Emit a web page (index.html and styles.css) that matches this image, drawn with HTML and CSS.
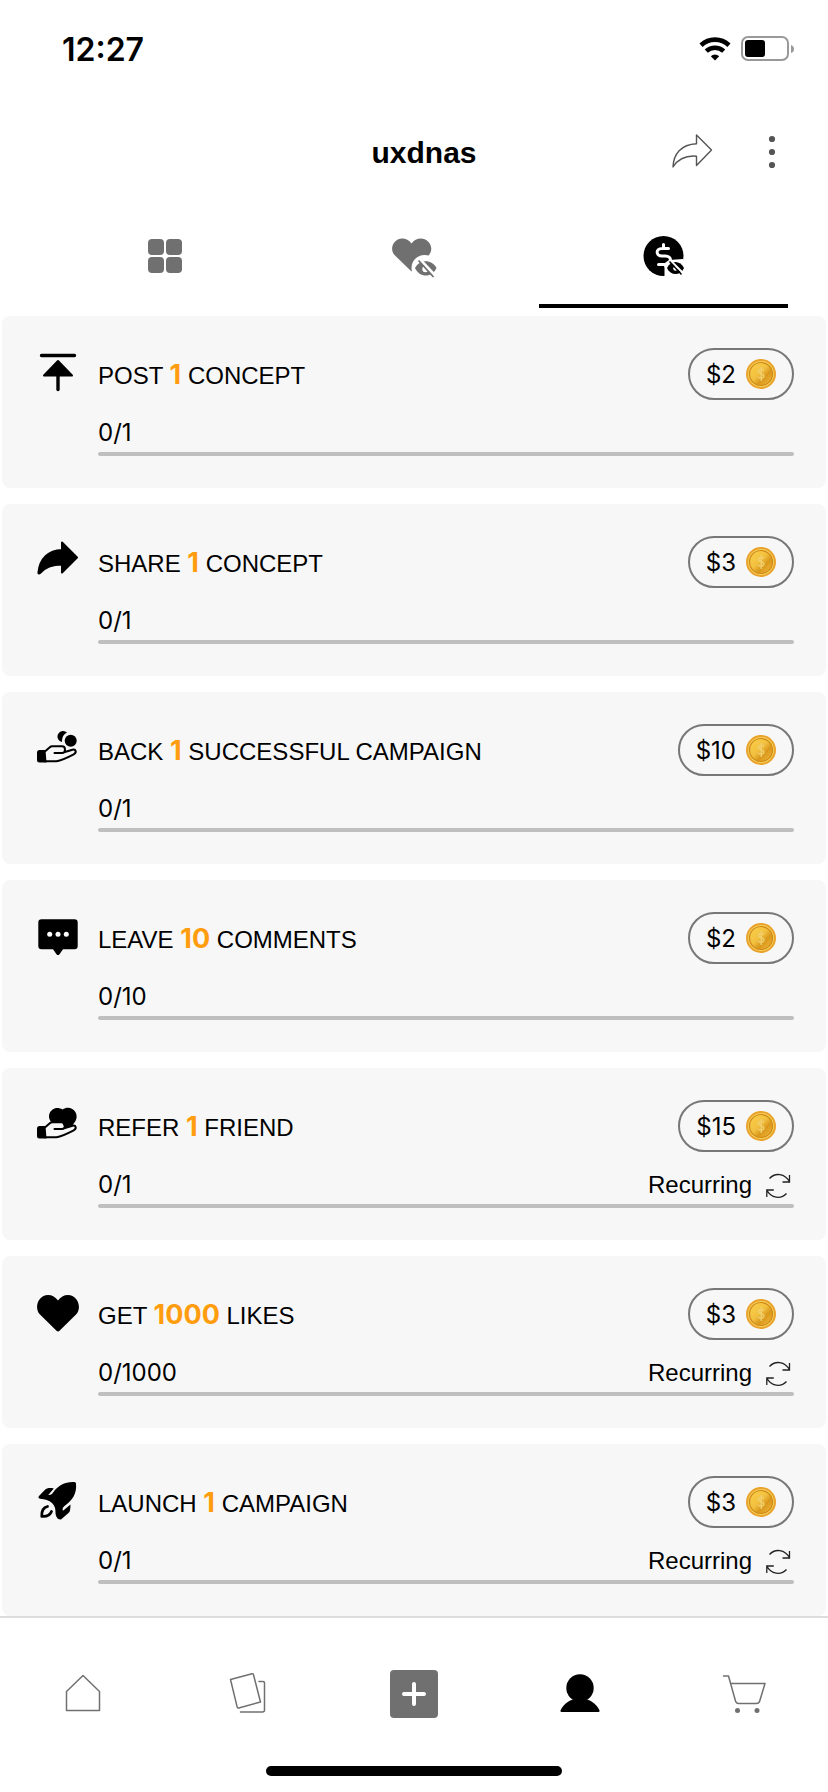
FILE: index.html
```
<!DOCTYPE html>
<html lang="en">
<head>
  <meta charset="UTF-8" />
  <meta name="viewport" content="width=device-width, initial-scale=1.0"/>
  <title>uxdnas - Rewards</title>
  <link rel="stylesheet" href="styles.css">
</head>
<body>

  <!-- Shared symbols -->
  <svg class="sprite" aria-hidden="true">
    <defs>
      <linearGradient id="gold" x1="0" y1="0" x2="1" y2="1">
        <stop offset="0" stop-color="#fbd04a"/>
        <stop offset="0.45" stop-color="#f2c040"/>
        <stop offset="0.65" stop-color="#d9981c"/>
        <stop offset="1" stop-color="#f7c040"/>
      </linearGradient>
    </defs>
    <symbol id="coin" viewBox="0 0 30 30">
      <circle cx="15" cy="15" r="15" fill="#e9a22a"/>
      <circle cx="15" cy="15" r="13" fill="#f6cf5c"/>
      <circle cx="15" cy="15" r="11.5" fill="url(#gold)" stroke="#cf8a18" stroke-width="1.2"/>
      <path d="M18 11.500c-1-1.500-5.500-1.600-5.500 1 0 2.600 5.500 1.900 5.500 4.700 0 2.500-4.700 2.400-6 .8M15.300 8v14" fill="none" stroke="#f0cf6c" stroke-width="1.500"/>
    </symbol>
    <symbol id="recur" viewBox="0 0 30 30">
      <path d="M5.500 8.500C11 2.500 21 3 25.500 12M25.500 5v7h-7M22.500 23.500C17 29.500 7 28.500 2.800 20M2.800 27v-7h7" fill="none" stroke="#222" stroke-width="1.3"/>
    </symbol>
    <symbol id="hand" viewBox="0 0 44 44">
      <path d="M3.500 22H9.500l1 12.500h-7Q1 34.500 1 32v-7.500q0-2.500 2.500-2.500z"/>
      <path d="M9.500 23 13.500 19.500q1.200-1.200 3-1.200h9.500c4 0 4 6.700 0 6.700h-7.500M28 24.200l8.500-2.500c3.500-.8 4.500 3 1.200 4.600C32.500 29 26 32.300 20.500 33.300H9" fill="none" stroke="#000" stroke-width="2" stroke-linecap="round" stroke-linejoin="round"/>
    </symbol>
  </svg>

  <div class="status-bar">
    <span class="time">12:27</span>
    <div class="status-icons">
      <svg width="32" height="24" viewBox="0 0 32 24" aria-label="Wi-Fi">
        <path d="M2 8.200A20.500 20.500 0 0 1 30 8.200" fill="none" stroke="#000" stroke-width="4.600"/>
        <path d="M7.300 14.200a12.500 12.500 0 0 1 17.400 0" fill="none" stroke="#000" stroke-width="4.400"/>
        <path d="M11.800 19.200a6.200 6.200 0 0 1 8.400 0L16 23.500z"/>
      </svg>
      <svg width="53" height="26" viewBox="0 0 53 26" aria-label="Battery">
        <rect x="1" y="1" width="46" height="23" rx="6" fill="none" stroke="#999" stroke-width="2"/>
        <rect x="4" y="4" width="20" height="17" rx="3"/>
        <path d="M50 9q3 1 3 4t-3 4z" fill="#999"/>
      </svg>
    </div>
  </div>

  <header class="header">
    <h1>uxdnas</h1>
    <div class="header-actions">
      <button type="button" class="icon-btn" aria-label="Share">
        <svg width="44" height="44" viewBox="0 0 44 44">
          <path d="M26.500 4 41.500 19 26.500 34.500V25.200C18 24.500 9 26.500 3 36 3.500 23 11 13.500 26.500 12.800z" fill="none" stroke="#555" stroke-width="1.400" stroke-linejoin="round"/>
        </svg>
      </button>
      <button type="button" class="icon-btn menu-btn" aria-label="More options">
        <svg width="32" height="44" viewBox="0 0 32 44" fill="#555">
          <circle cx="16" cy="8" r="3.100"/>
          <circle cx="16" cy="21" r="3.100"/>
          <circle cx="16" cy="34" r="3.100"/>
        </svg>
      </button>
    </div>
  </header>

  <div class="tabs" role="tablist">
    <button type="button" class="tab" role="tab" aria-label="Concepts">
      <svg width="48" height="48" viewBox="0 0 48 48" fill="#707070">
        <rect x="7" y="7" width="16" height="16" rx="4"/>
        <rect x="25" y="7" width="16" height="16" rx="4"/>
        <rect x="7" y="25" width="16" height="16" rx="4"/>
        <rect x="25" y="25" width="16" height="16" rx="4"/>
      </svg>
    </button>
    <button type="button" class="tab" role="tab" aria-label="Liked, hidden">
      <svg width="48" height="48" viewBox="0 0 48 48">
        <path d="M21.500 39.500 5 23.500C-2 16 5 6.500 12 6.500c4 0 7 1.800 9.500 5 2.500-3.200 5.500-5 9.500-5 7 0 14 8.500 8 16.500z" fill="#707070"/>
        <circle cx="34.500" cy="36" r="13" fill="#fff"/>
        <path d="M25 36c4.500-9 17-9 21.500 0-4.500 10-17 10-21.500 0z" fill="#707070"/>
        <circle cx="35.500" cy="37" r="3.200" fill="#fff"/>
        <path d="M30 27.500 45.500 44" stroke="#fff" stroke-width="3"/>
        <path d="M28.500 28.500 43.500 45" stroke="#707070" stroke-width="1.800"/>
      </svg>
    </button>
    <button type="button" class="tab active" role="tab" aria-selected="true" aria-label="Rewards, hidden">
      <svg width="48" height="48" viewBox="0 0 48 48">
        <circle cx="24.500" cy="24" r="20"/>
        <path d="M29.500 16.500h-6.500c-6.500 0-6.500 7.500 0 7.500h3.500c3 0 5 2 5 4M24.500 12.500v4M19.500 32.500h6" fill="none" stroke="#fff" stroke-width="3" stroke-linecap="round"/>
        <path d="M25.500 45V36l-1-4 5.500-4 14-1 3 18z" fill="#fff"/>
        <path d="M28 36c3.500-8 13.500-8 17 0-3.500 8-13.500 8-17 0z"/>
        <circle cx="36.500" cy="36.500" r="2.300" fill="#fff"/>
        <path d="m32 29 12 12" stroke="#fff" stroke-width="2"/>
        <path d="m30.500 29.500 12 13" stroke="#000" stroke-width="1.500"/>
      </svg>
    </button>
  </div>

  <main class="tasks">
    <section class="card">
      <svg class="task-icon" viewBox="0 0 44 44">
        <path d="M5.500 3.500h33M22 24v13.500" stroke="#000" stroke-width="3.400" stroke-linecap="round"/>
        <path d="M22 9 36 23.500H8z" stroke="#000" stroke-width="2" stroke-linejoin="round"/>
      </svg>
      <h2>POST <b>1</b> CONCEPT</h2>
      <div class="reward">$2 <svg class="coin"><use href="#coin"/></svg></div>
      <div class="progress-row"><label for="p1">0/1</label></div>
      <progress id="p1" value="0" max="1"></progress>
    </section>

    <section class="card">
      <svg class="task-icon" viewBox="0 0 44 44">
        <path d="M26 2.500 41 17.500 26 32.500V24.500C17 24.500 10 26 4 33c-1 1-2 .3-1.500-1C4 19 12 10.500 26 10z" stroke="#000" stroke-width="2" stroke-linejoin="round"/>
      </svg>
      <h2>SHARE <b>1</b> CONCEPT</h2>
      <div class="reward">$3 <svg class="coin"><use href="#coin"/></svg></div>
      <div class="progress-row"><label for="p2">0/1</label></div>
      <progress id="p2" value="0" max="1"></progress>
    </section>

    <section class="card">
      <svg class="task-icon" viewBox="0 0 44 44">
        <circle cx="34.700" cy="12.700" r="6"/>
        <path d="M31 4.500A5.600 5.600 0 1 0 26 14q-.5-6.500 5-9.500z"/>
        <use href="#hand"/>
      </svg>
      <h2>BACK <b>1</b> SUCCESSFUL CAMPAIGN</h2>
      <div class="reward">$10 <svg class="coin"><use href="#coin"/></svg></div>
      <div class="progress-row"><label for="p3">0/1</label></div>
      <progress id="p3" value="0" max="1"></progress>
    </section>

    <section class="card">
      <svg class="task-icon" viewBox="0 0 44 44">
        <path d="M5.500 3.300h33q3.200 0 3.200 3.200v23.600q0 3.200-3.200 3.200H27l-3.500 4.900q-1.500 1.800-3 0L17 33.300H5.500q-3.200 0-3.200-3.200V6.500q0-3.200 3.200-3.200z"/>
        <g fill="#fff">
          <circle cx="13.700" cy="18.300" r="2.500"/>
          <circle cx="22" cy="18.300" r="2.500"/>
          <circle cx="30.300" cy="18.300" r="2.500"/>
        </g>
      </svg>
      <h2>LEAVE <b>10</b> COMMENTS</h2>
      <div class="reward">$2 <svg class="coin"><use href="#coin"/></svg></div>
      <div class="progress-row"><label for="p4">0/10</label></div>
      <progress id="p4" value="0" max="10"></progress>
    </section>

    <section class="card">
      <svg class="task-icon" viewBox="0 0 44 44">
        <path d="M27 26 15 17.500C9 10 18 0 26.500 5.500 35 0 44 9 39.500 17L36 22z"/>
        <path d="m10.500 23 5-4.500h10.500l2 4-1 2.500 10-2 2 2.500L20 33.500h-9.500z" fill="#f7f7f7"/>
        <use href="#hand"/>
      </svg>
      <h2>REFER <b>1</b> FRIEND</h2>
      <div class="reward">$15 <svg class="coin"><use href="#coin"/></svg></div>
      <div class="progress-row">
        <label for="p5">0/1</label>
        <span class="recurring">Recurring <svg><use href="#recur"/></svg></span>
      </div>
      <progress id="p5" value="0" max="1"></progress>
    </section>

    <section class="card">
      <svg class="task-icon" viewBox="0 0 44 44">
        <path d="M20.500 38.800 4 22.500C-2.500 15.500 2.500 3 12 3c4.200 0 7.500 2 10 5.500C24.500 5 27.800 3 32 3c9.500 0 14.500 12.500 8 19.500L23.500 38.800q-1.500 1.400-3 0z"/>
      </svg>
      <h2>GET <b>1000</b> LIKES</h2>
      <div class="reward">$3 <svg class="coin"><use href="#coin"/></svg></div>
      <div class="progress-row">
        <label for="p6">0/1000</label>
        <span class="recurring">Recurring <svg><use href="#recur"/></svg></span>
      </div>
      <progress id="p6" value="0" max="1000"></progress>
    </section>

    <section class="card">
      <svg class="task-icon" viewBox="0 0 44 44">
        <path d="M38.500 2C29 1.500 22 5.500 17.500 12c-1.500 2-3 3.500-5.200 3L17.800 8.500c-4-1-7-.5-9 1.500L3 16q-1.500 2 1 2.800c5 .7 9 1.200 12 4.200s3.500 6 3.500 9.500c0 3.500 2 7.500 5.500 7l8-7q1.500-1.500 1.500-8l-7.500 6.300c-1-2 0-3.500 1.500-4.800C36.500 20.500 41 13.500 40 3.500q-.2-1.300-1.500-1.500z"/>
        <path d="M11.500 26.500C7 27.500 5.500 31 5.800 36.300c4.700.5 8.200-1.300 9.700-4.800" fill="none" stroke="#000" stroke-width="2.800" stroke-linecap="round" stroke-linejoin="round"/>
      </svg>
      <h2>LAUNCH <b>1</b> CAMPAIGN</h2>
      <div class="reward">$3 <svg class="coin"><use href="#coin"/></svg></div>
      <div class="progress-row">
        <label for="p7">0/1</label>
        <span class="recurring">Recurring <svg><use href="#recur"/></svg></span>
      </div>
      <progress id="p7" value="0" max="1"></progress>
    </section>
  </main>

  <nav class="bottom-nav">
    <div class="nav-items">
      <a href="#" aria-label="Home">
        <svg viewBox="0 0 48 48" fill="none" stroke="#707070" stroke-width="1.500" stroke-linejoin="round">
          <path d="M7.500 21.500 24 5.500l16.500 16v19h-33z"/>
        </svg>
      </a>
      <a href="#" aria-label="Concepts">
        <svg viewBox="0 0 48 48" fill="none" stroke="#707070" stroke-width="1.500" stroke-linejoin="round" stroke-linecap="round">
          <path d="M6.500 9.500 28 3.800q1.200-.3 1.500.9l7 27.300-21.800 6q-1.200.3-1.500-.9z"/>
          <path d="M35 11.500h4q1.500 0 1.500 1.500v27q0 2-2 2H16.500"/>
        </svg>
      </a>
      <a href="#" aria-label="Add">
        <svg viewBox="0 0 48 48">
          <rect width="48" height="48" rx="4" fill="#707070"/>
          <path d="M24 14v20M14 24h20" stroke="#fff" stroke-width="4" stroke-linecap="round"/>
        </svg>
      </a>
      <a href="#" aria-label="Profile">
        <svg viewBox="0 0 48 48">
          <circle cx="24" cy="18" r="13.700"/>
          <path d="M17 29.500h14c6 2 10 5.500 12.500 11q.5 1.500-1.500 1.500H6q-2 0-1.500-1.500C7 35 11 31.500 17 29.500z"/>
        </svg>
      </a>
      <a href="#" aria-label="Cart">
        <svg viewBox="0 0 48 48">
          <path d="M2.500 6H7.500l7 25q.8 2.500 3 2.500h18q2.500 0 3.200-2.500L44 13.500H10" fill="none" stroke="#707070" stroke-width="1.500" stroke-linejoin="round" stroke-linecap="round"/>
          <circle cx="16.500" cy="40.500" r="2.500" fill="#707070"/>
          <circle cx="36" cy="40.500" r="2.500" fill="#707070"/>
        </svg>
      </a>
    </div>
    <div class="home-indicator"></div>
  </nav>

</body>
</html>
```

FILE: styles.css
```
* {
  box-sizing: border-box;
}

body {
  margin: 0;
  min-height: 100vh;
  display: flex;
  flex-direction: column;
  background-color: #fff;
  color: #000;
  font-family: "Liberation Sans", Arial, sans-serif;
  font-size: 24px;
}

svg {
  display: block;
  flex-shrink: 0;
}

.sprite {
  position: absolute;
  width: 0;
  height: 0;
}

button {
  padding: 0;
  border: none;
  background: none;
  cursor: pointer;
}

/* Status bar */
.status-bar {
  display: flex;
  justify-content: space-between;
  align-items: center;
  height: 98px;
  padding: 0 34px 0 62px;
}

.time {
  font-family: Inter, sans-serif;
  font-size: 32px;
  font-weight: 600;
}

.status-icons {
  display: flex;
  align-items: center;
  gap: 10px;
}

/* Header */
.header {
  display: grid;
  grid-template-columns: 1fr auto 1fr;
  align-items: center;
  height: 110px;
  padding: 0 40px 0 60px;
}

.header h1 {
  grid-column: 2;
  margin: 0;
  font-size: 30px;
}

.header-actions {
  display: flex;
  justify-content: flex-end;
  gap: 42px;
}

/* Tabs */
.tabs {
  display: grid;
  grid-template-columns: repeat(3, 1fr);
  padding: 0 40px;
  margin-bottom: 8px;
}

.tab {
  display: flex;
  justify-content: center;
  align-items: center;
  height: 100px;
  border-bottom: 4px solid transparent;
}

.tab.active {
  border-bottom-color: #000;
}

/* Task cards */
.tasks {
  flex: 1;
  display: flex;
  flex-direction: column;
  gap: 16px;
  padding: 0 2px;
}

.card {
  display: grid;
  grid-template-columns: 44px 1fr auto;
  column-gap: 18px;
  align-items: center;
  padding: 32px 32px 32px 34px;
  background-color: #f7f7f7;
  border-radius: 8px;
}

.task-icon {
  width: 44px;
  height: 44px;
}

.card h2 {
  margin: 0;
  padding-top: 2px;
  font-size: 24px;
  font-weight: normal;
  line-height: 32px;
}

.card h2 b {
  font-family: Inter, sans-serif;
  font-size: 27px;
  color: #ff9d0f;
}

.reward {
  display: flex;
  align-items: center;
  gap: 10px;
  height: 52px;
  padding: 0 16px;
  border: 2px solid #777;
  border-radius: 26px;
}

.reward,
label {
  font-family: Inter, sans-serif;
}

.coin {
  width: 30px;
  height: 30px;
}

.progress-row {
  grid-column: 2 / 4;
  display: flex;
  justify-content: space-between;
  margin-top: 17px;
  line-height: 32px;
}

.recurring {
  display: flex;
  align-items: center;
  gap: 12px;
}

.recurring svg {
  width: 30px;
  height: 30px;
}

progress {
  -webkit-appearance: none;
  appearance: none;
  grid-column: 2 / 4;
  display: block;
  width: 100%;
  height: 4px;
  margin-top: 3px;
  border: none;
  border-radius: 2px;
  background-color: #bfbfbf;
  overflow: hidden;
}

progress::-webkit-progress-bar {
  background-color: #bfbfbf;
}

progress::-webkit-progress-value {
  background-color: #ff9d0f;
}

/* Bottom navigation */
.bottom-nav {
  border-top: 2px solid #ddd;
}

.nav-items {
  display: grid;
  grid-template-columns: repeat(5, 1fr);
  justify-items: center;
  padding: 52px 0 48px;
}

.nav-items svg {
  width: 48px;
  height: 48px;
}

.home-indicator {
  width: 296px;
  height: 10px;
  margin: 0 auto 16px;
  background-color: #000;
  border-radius: 5px;
}
```
